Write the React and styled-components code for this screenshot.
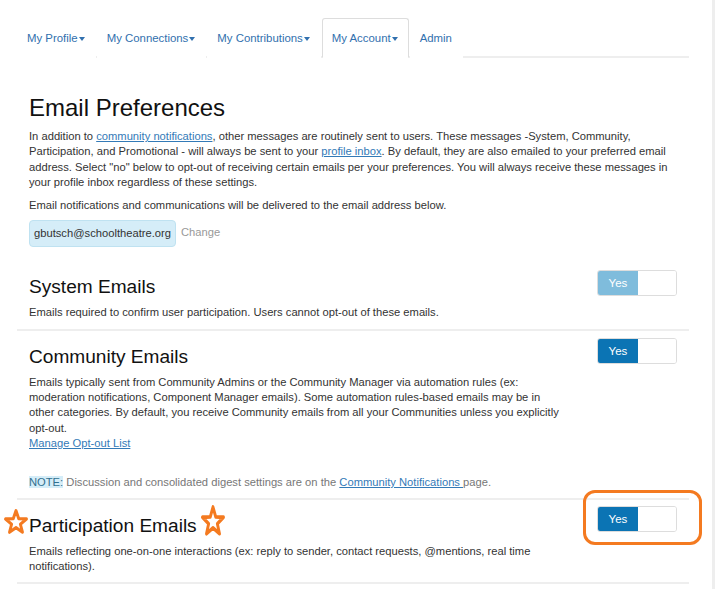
import React from 'react';
import styled, { createGlobalStyle } from 'styled-components';

const GlobalStyle = createGlobalStyle`
  body {
    margin: 0;
    background: #fff;
    font-family: "Liberation Sans", Arial, sans-serif;
    color: #333;
  }
`;

const Page = styled.div`
  width: 715px;
  min-height: 589px;
  border-right: 3px solid #eee;
  padding: 18px 0 0 17px;
  box-sizing: border-box;
`;

const Container = styled.div`
  width: 672px;
`;

const Tabs = styled.ul`
  display: flex;
  list-style: none;
  margin: 0;
  padding: 0;
  border-bottom: 2px solid #eee;
`;

const Tab = styled.li`
  margin: 0 1px -2px 0;
  padding: 12px 10px 11px 9px;
  font-size: 11.4px;
  line-height: 15px;
  color: #3170ae;
  border: 1px solid ${p => (p.$active ? '#ddd' : 'transparent')};
  border-bottom-color: ${p => (p.$active ? '#fff' : 'transparent')};
  border-radius: 3px 3px 0 0;
  background: #fff;
  display: flex;
  align-items: center;
`;

const Caret = styled.span`
  display: inline-block;
  margin-left: 1px;
  width: 0;
  height: 0;
  border-left: 3.5px solid transparent;
  border-right: 3.5px solid transparent;
  border-top: 4px solid #3170ae;
`;

const Intro = styled.div`
  padding: 0 12px;
`;

const Title = styled.h1`
  margin: 35px 0 6px;
  font-size: 24px;
  font-weight: 400;
  line-height: 30px;
  color: #111;
`;

const Text = styled.p`
  margin: 0 0 ${p => p.$gap || 0}px;
  font-size: 11.2px;
  line-height: 15.3px;
  color: #333;
`;

const A = styled.a`
  color: #337ab7;
  text-decoration: underline;
`;

const EmailRow = styled.div`
  display: flex;
  align-items: center;
  gap: 5px;
  margin: 7px 0 14px;
`;

const EmailChip = styled.span`
  display: inline-block;
  padding: 6px 4px;
  font-size: 11.2px;
  line-height: 13px;
  color: #333;
  background: #d5edf8;
  border: 1px solid #bfe2f1;
  border-radius: 4px;
`;

const Change = styled.span`
  font-size: 11.2px;
  color: #999;
  margin-top: -4px;
`;

const Section = styled.div`
  display: flex;
  justify-content: space-between;
  align-items: flex-start;
  padding: ${p => p.$pad || '8px 12px 8px'};
  border-bottom: 2px solid #eee;
`;

const SectionBody = styled.div`
  flex: 1;
  max-width: 534px;
`;

const Heading = styled.h2`
  position: relative;
  display: flex;
  align-items: center;
  margin: ${p => p.$top || 7}px 0 7px;
  font-size: 19.1px;
  font-weight: 400;
  line-height: 22px;
  color: #111;
`;

const StarSvg = styled.svg`
  display: block;
  flex: none;
  overflow: visible;
`;

const LeftStar = styled(StarSvg)`
  position: absolute;
  left: -25px;
  top: -6px;
`;

const RightStar = styled(StarSvg)`
  margin: -10px 0 0 4px;
`;

const ToggleWrap = styled.div`
  position: relative;
  flex: none;
`;

const Toggle = styled.div`
  display: flex;
  width: 80px;
  height: 26px;
  box-sizing: border-box;
  border: 1px solid #ddd;
  border-radius: 3px;
  overflow: hidden;
`;

const ToggleOn = styled.span`
  width: 40px;
  display: flex;
  align-items: center;
  justify-content: center;
  font-size: 11.5px;
  color: #fff;
  background: ${p => (p.$disabled ? '#7fbcdc' : '#0b74b4')};
`;

const ToggleOff = styled.span`
  flex: 1;
  background: #fff;
`;

const Highlight = styled.div`
  position: absolute;
  left: -14px;
  right: -25px;
  top: -16px;
  bottom: -13px;
  border: 3px solid #f47a20;
  border-radius: 12px;
`;

const Note = styled.p`
  margin: 24px 0 0;
  font-size: 11.2px;
  line-height: 15.3px;
  color: #777;
`;

const NoteLabel = styled.span`
  background: #d5edf8;
  color: #31708f;
`;

const starPath =
  'M12 1.1 L14.82 8.72 L22.94 9.05 L16.56 14.08 L18.76 21.9 L12 17.4 L5.24 21.9 L7.44 14.08 L1.06 9.05 L9.18 8.72 Z';

const Star = ({ Comp, w, h }) => (
  <Comp width={w} height={h} viewBox="-0.5 -0.5 25 25" preserveAspectRatio="none">
    <path d={starPath} fill="#fff" stroke="#f47a20" strokeWidth="3" strokeLinejoin="round" />
  </Comp>
);

const YesToggle = ({ disabled }) => (
  <Toggle>
    <ToggleOn $disabled={disabled}>Yes</ToggleOn>
    <ToggleOff />
  </Toggle>
);

const tabs = [
  { label: 'My Profile', caret: true },
  { label: 'My Connections', caret: true },
  { label: 'My Contributions', caret: true },
  { label: 'My Account', caret: true, active: true },
  { label: 'Admin' },
];

export default function App() {
  return (
    <>
      <GlobalStyle />
      <Page>
        <Container>
          <Tabs>
            {tabs.map(t => (
              <Tab key={t.label} $active={t.active}>
                {t.label}
                {t.caret && <Caret />}
              </Tab>
            ))}
          </Tabs>

          <Intro>
            <Title>Email Preferences</Title>
            <Text $gap={8}>
              In addition to <A>community notifications</A>, other messages are routinely sent to users. These messages -System, Community, Participation, and Promotional - will always be sent to your <A>profile inbox</A>. By default, they are also emailed to your preferred email address. Select "no" below to opt-out of receiving certain emails per your preferences. You will always receive these messages in your profile inbox regardless of these settings.
            </Text>
            <Text>
              Email notifications and communications will be delivered to the email address below.
            </Text>
            <EmailRow>
              <EmailChip>gbutsch@schooltheatre.org</EmailChip>
              <Change>Change</Change>
            </EmailRow>
          </Intro>

          <Section $pad="9px 12px 8px">
            <SectionBody>
              <Heading $top={6}>System Emails</Heading>
              <Text>Emails required to confirm user participation. Users cannot opt-out of these emails.</Text>
            </SectionBody>
            <ToggleWrap>
              <YesToggle disabled />
            </ToggleWrap>
          </Section>

          <Section $pad="7px 12px 7px">
            <SectionBody>
              <Heading $top={8}>Community Emails</Heading>
              <Text>
                Emails typically sent from Community Admins or the Community Manager via automation rules (ex: moderation notifications, Component Manager emails). Some automation rules-based emails may be in other categories. By default, you receive Community emails from all your Communities unless you explicitly opt-out.
              </Text>
              <Text><A>Manage Opt-out List</A></Text>
              <Note>
                <NoteLabel>NOTE:</NoteLabel> Discussion and consolidated digest settings are on the <A>Community Notifications </A>page.
              </Note>
            </SectionBody>
            <ToggleWrap>
              <YesToggle />
            </ToggleWrap>
          </Section>

          <Section $pad="6px 12px 8px">
            <SectionBody>
              <Heading $top={9}>
                <Star Comp={LeftStar} w={24} h={26} />
                Participation Emails
                <Star Comp={RightStar} w={24} h={32} />
              </Heading>
              <Text>
                Emails reflecting one-on-one interactions (ex: reply to sender, contact requests, @mentions, real time notifications).
              </Text>
            </SectionBody>
            <ToggleWrap>
              <YesToggle />
              <Highlight />
            </ToggleWrap>
          </Section>
        </Container>
      </Page>
    </>
  );
}
